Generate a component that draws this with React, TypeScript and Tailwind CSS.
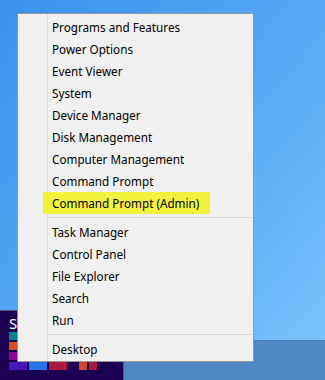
const groups: string[][] = [
  [
    "Programs and Features",
    "Power Options",
    "Event Viewer",
    "System",
    "Device Manager",
    "Disk Management",
    "Computer Management",
    "Command Prompt",
    "Command Prompt (Admin)",
  ],
  ["Task Manager", "Control Panel", "File Explorer", "Search", "Run"],
  ["Desktop"],
]

const highlighted = "Command Prompt (Admin)"

function MenuItem({ label }: { label: string }) {
  if (label === highlighted) {
    return (
      <div className="flex h-[22px] items-center">
        <div className="relative -ml-[5px] flex h-[22px] w-[167px] items-center bg-[#f2f23c] pl-[9px] pt-px">
          {label}
        </div>
      </div>
    )
  }
  return <div className="flex h-[22px] items-center pl-[4px] pt-px">{label}</div>
}

function Separator() {
  return (
    <div className="flex h-[7px] items-center pr-[1px]">
      <div className="h-px w-full bg-[#d4d4d4]" />
    </div>
  )
}

function StartTip() {
  return (
    <div className="flex h-[70px] w-[124px] flex-col border-t border-r border-[#5a5a6e] bg-[#1c0051] pl-[9px]">
      <div className="mt-[4px] h-[17px] text-[15px] leading-[17px] text-white font-['Noto_Sans',sans-serif]">
        Start
      </div>
      <div className="flex flex-col gap-[2px]">
        <div className="h-[8px] w-[8px] bg-[#00878f]" />
        <div className="h-[8px] w-[8px] bg-[#d24e22]" />
        <div className="h-[8px] w-[8px] bg-[#8c0095]" />
        <div className="flex gap-[2px]">
          <div className="h-[8px] w-[18px] bg-[#4617b4]" />
          <div className="h-[8px] w-[18px] bg-[#2673ec]" />
          <div className="h-[8px] w-[18px] bg-[#ac193d]" />
          <div className="h-[8px] w-[8px]" />
          <div className="h-[8px] w-[8px] bg-[#d24726]" />
          <div className="h-[8px] w-[8px] bg-[#ac193d]" />
        </div>
      </div>
    </div>
  )
}

export default function App() {
  return (
    <div className="relative flex h-[380px] w-[325px] flex-col justify-end overflow-hidden bg-gradient-to-br from-[#3a91ee] via-[#56a9f5] to-[#7cc4fb]">
      <div className="flex items-end">
        <StartTip />
        <div className="h-[40px] flex-1 border-t border-[#4a80b8] bg-[#4f88c4]" />
      </div>

      <div className="absolute left-[17px] top-[13px] flex h-[349px] w-[237px] border border-[#979797] bg-[#f0f0f0] text-[11.7px] text-black font-['Noto_Sans',sans-serif]">
        <div className="w-[30px] shrink-0 border-r border-[#dadada]" />
        <div className="flex flex-1 flex-col pt-[2px]">
          {groups.map((group, i) => (
            <div key={i}>
              {i > 0 && <Separator />}
              {group.map((label) => (
                <MenuItem key={label} label={label} />
              ))}
            </div>
          ))}
        </div>
      </div>
    </div>
  )
}
